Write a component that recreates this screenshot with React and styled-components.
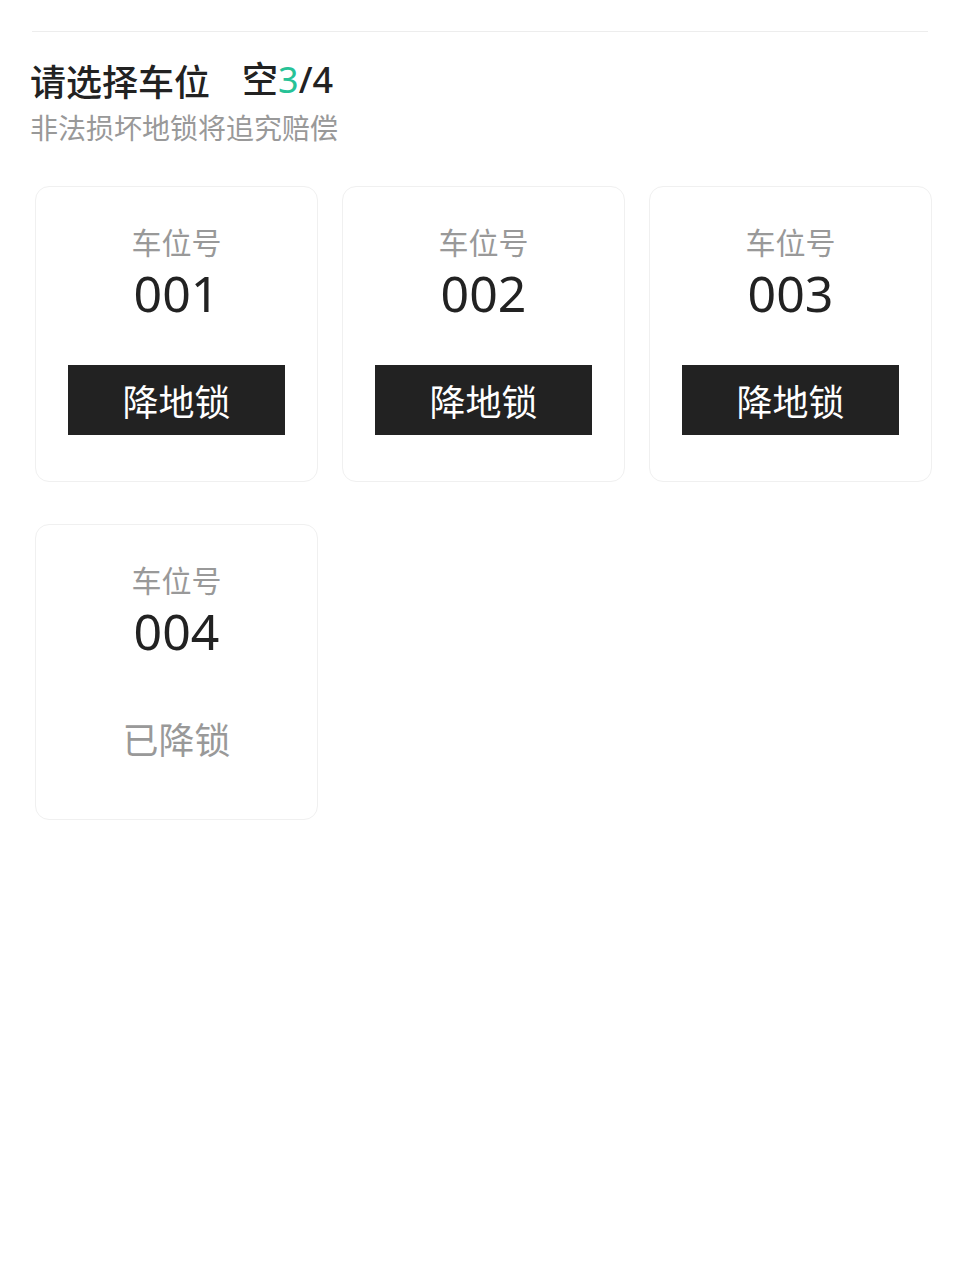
import styled, { createGlobalStyle } from 'styled-components';

const spots = [
  { id: '001', locked: true },
  { id: '002', locked: true },
  { id: '003', locked: true },
  { id: '004', locked: false },
];

const GlobalStyle = createGlobalStyle`
  body {
    margin: 0;
    background: #fff;
    font-family: "Noto Sans CJK SC", "Noto Sans", sans-serif;
  }
`;

const App = () => {
  const free = spots.filter((s) => s.locked).length;
  return (
    <Page>
      <GlobalStyle />
      <Divider />
      <Title>
        请选择车位
        <Count>
          空<Free>{free}</Free>/{spots.length}
        </Count>
      </Title>
      <Hint>非法损坏地锁将追究赔偿</Hint>

      <Grid>
        {spots.map((spot) => (
          <Card key={spot.id}>
            <Label>车位号</Label>
            <Number>{spot.id}</Number>
            {spot.locked ? <LockButton>降地锁</LockButton> : <Status>已降锁</Status>}
          </Card>
        ))}
      </Grid>
    </Page>
  );
};

const Page = styled.div`
  padding: 31px 32px 0 32px;
  min-height: 1249px;
  box-sizing: border-box;
`;

const Divider = styled.div`
  height: 1px;
  background: #ededed;
`;

const Title = styled.h1`
  margin: 26px 0 0 -2px;
  font-size: 36px;
  line-height: 44px;
  font-weight: 500;
  color: #222;
  display: flex;
  align-items: center;
`;

const Count = styled.span`
  margin-left: 32px;
  font-family: "Noto Sans", "Noto Sans CJK SC", sans-serif;
  font-weight: 500;
`;

const Free = styled.span`
  color: #27c297;
  font-weight: 400;
`;

const Hint = styled.p`
  margin: 7px 0 0 -2px;
  font-size: 28px;
  line-height: 36px;
  color: #999;
`;

const Grid = styled.div`
  display: grid;
  grid-template-columns: repeat(3, 283px);
  column-gap: 24px;
  row-gap: 42px;
  margin: 41px 0 0 3px;
`;

const Card = styled.div`
  display: flex;
  flex-direction: column;
  align-items: center;
  border: 1px solid #f0f0f0;
  border-radius: 14px;
  padding: 36px 0 46px;
`;

const Label = styled.div`
  font-size: 30px;
  line-height: 36px;
  color: #999;
`;

const Number = styled.div`
  margin-top: 8px;
  font-family: "Noto Sans", "Noto Sans CJK SC", sans-serif;
  font-size: 50px;
  line-height: 52px;
  color: #222;
`;

const LockButton = styled.button`
  margin-top: 46px;
  width: 217px;
  height: 70px;
  border: none;
  background: #222;
  color: #fff;
  font-family: inherit;
  font-size: 36px;
  padding: 0;
`;

const Status = styled.div`
  margin-top: 46px;
  height: 70px;
  display: flex;
  align-items: center;
  font-size: 36px;
  color: #999;
`;

export default App;
